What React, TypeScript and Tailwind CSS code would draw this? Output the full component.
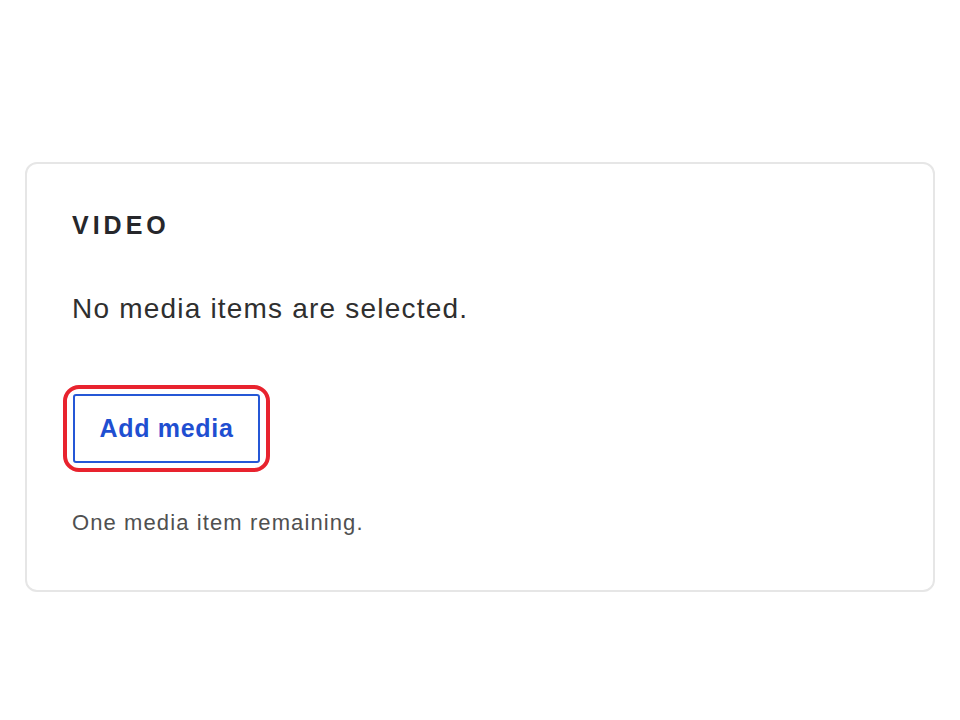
export default function App() {
  return (
    <div className="w-[960px] h-[720px] bg-white pt-[162px] px-[25px] font-['Liberation_Sans',Arial,sans-serif]">
      <section className="h-[430px] border-2 border-[#e6e6e6] rounded-[12px] pl-[45px] pt-[46px]">
        <h2 className="text-[25px] leading-[30px] font-bold tracking-[0.16em] text-[#26272b]">VIDEO</h2>
        <p className="mt-[52px] text-[28px] leading-[34px] tracking-[1.2px] text-[#2f2f2f]">No media items are selected.</p>
        <div className="mt-[59px] ml-[-9px] inline-flex rounded-[16px] border-4 border-[#e8232e] px-[6px] py-[5px]">
          <button className="w-[187px] h-[69px] border-2 border-[#2557d6] rounded-[3px] text-[25px] tracking-[0.7px] font-bold text-[#1f4fd1] bg-white">
            Add media
          </button>
        </div>
        <p className="mt-[38px] text-[22px] leading-[26px] tracking-[1.1px] text-[#505050]">One media item remaining.</p>
      </section>
    </div>
  );
}
